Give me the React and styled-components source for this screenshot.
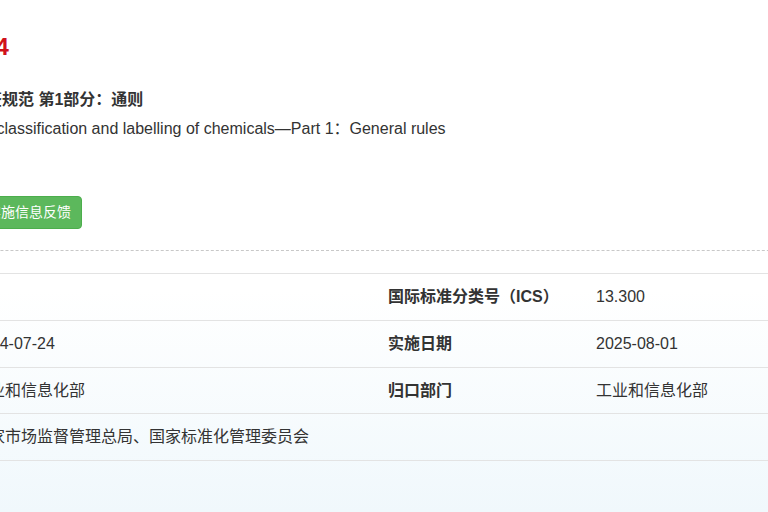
import React from 'react'
import styled, { createGlobalStyle } from 'styled-components'

const GlobalStyle = createGlobalStyle`
  html, body {
    margin: 0;
    padding: 0;
  }
  body {
    font-family: "Liberation Sans", Arial, "Noto Sans CJK SC", sans-serif;
    color: #333;
  }
`

const Page = styled.div`
  width: 768px;
  height: 512px;
  overflow: hidden;
  background: linear-gradient(to bottom, #fff 0, #fff 290px, #f0f8fc 512px);
`
const Content = styled.div`
  margin-left: -240px;
  width: 1100px;
  padding-top: 30px;
`
const StdNo = styled.h1`
  margin: 0;
  padding-left: ${props => props.indent}px;
  font-size: 24px;
  line-height: 34px;
  font-weight: 700;
  color: #d0121b;
`
const Info = styled.div`
  margin-top: 21px;
  display: flex;
  flex-direction: column;
`
const InfoLine = styled.div`
  height: 29px;
  line-height: 29px;
  padding-left: ${props => props.indent}px;
  font-size: 16px;
  font-weight: ${props => (props.bold ? 700 : 400)};
  white-space: nowrap;
`
const Actions = styled.div`
  margin-top: 24px;
  display: flex;
  padding-left: ${props => props.indent}px;
`
const GreenButton = styled.button`
  height: 33px;
  padding: 0 10px;
  border: 1px solid #4cae4c;
  border-radius: 4px;
  background: #5cb85c;
  color: #fff;
  font-family: inherit;
  font-size: 14px;
  line-height: 31px;
  cursor: pointer;
`
const Divider = styled.div`
  margin-top: 21px;
  border-top: 1px dashed #c8c8c8;
`
const Table = styled.div`
  margin-top: 22px;
  display: grid;
  grid-template-columns: 213px 415px 208px 1fr;
  border-top: 1px solid #e3e3e3;
`
const Cell = styled.div`
  height: 45.75px;
  line-height: 45.75px;
  font-size: 16px;
  font-weight: ${props => (props.label ? 700 : 400)};
  color: #333;
  white-space: nowrap;
  border-bottom: 1px solid #e3e3e3;
  grid-column: ${props => props.span || 'auto'};
`

const rows = [
  ['中国标准分类号（CCS）', '', '国际标准分类号（ICS）', '13.300'],
  ['发布日期', '2024-07-24', '实施日期', '2025-08-01'],
  ['主管部门', '工业和信息化部', '归口部门', '工业和信息化部']
]

const App = () => (
  <Page>
    <GlobalStyle />
    <Content>
      <StdNo indent={58}>GB 30000.1-2024</StdNo>
      <Info>
        <InfoLine bold indent={114}>化学品分类和标签规范 第1部分：通则</InfoLine>
        <InfoLine indent={168}>
          Rules for classification and labelling of chemicals—Part 1：General rules
        </InfoLine>
        <InfoLine />
      </Info>
      <Actions indent={216}>
        <GreenButton>实施信息反馈</GreenButton>
      </Actions>
      <Divider />
      <Table>
        {rows.map(r => (
          <React.Fragment key={r[0]}>
            <Cell label>{r[0]}</Cell>
            <Cell>{r[1]}</Cell>
            <Cell label>{r[2]}</Cell>
            <Cell>{r[3]}</Cell>
          </React.Fragment>
        ))}
        <Cell label>发布单位</Cell>
        <Cell span='2 / 5'>国家市场监督管理总局、国家标准化管理委员会</Cell>
      </Table>
    </Content>
  </Page>
)

export default App
